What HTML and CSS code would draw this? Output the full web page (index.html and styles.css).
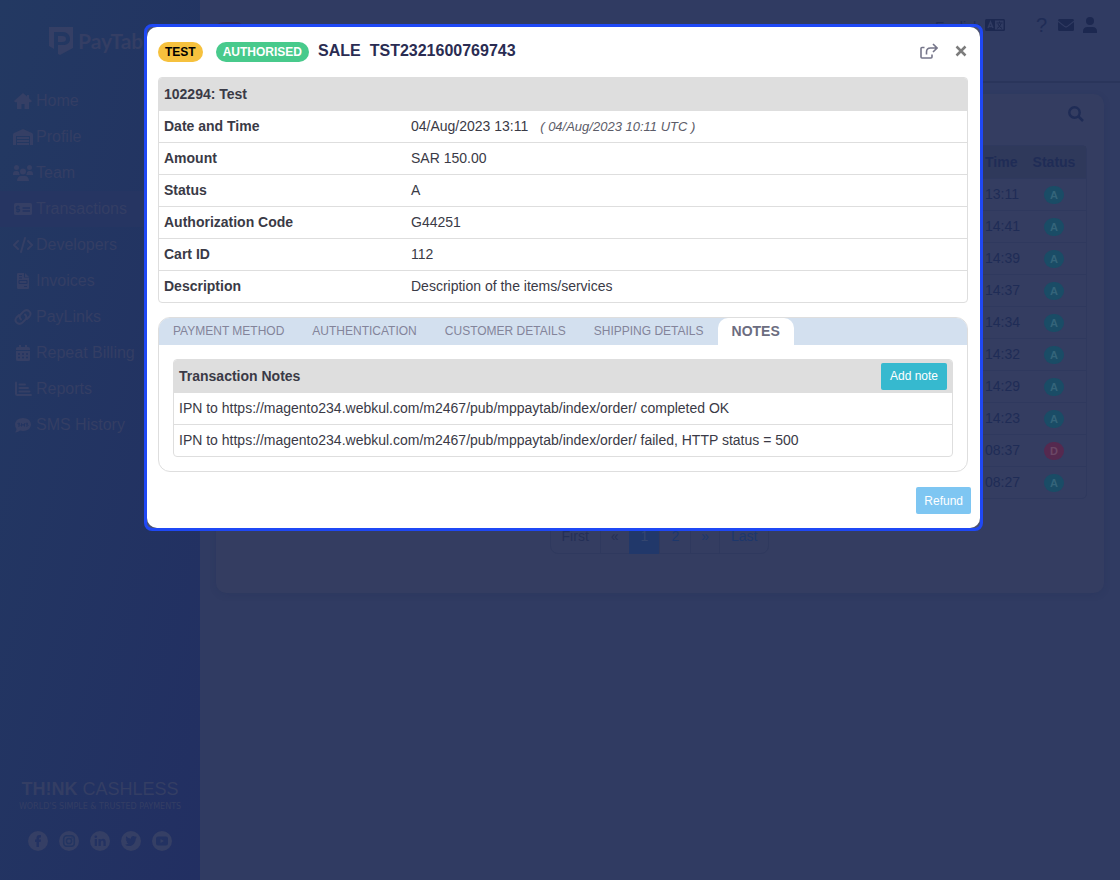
FILE: index.html
```
<!DOCTYPE html>
<html lang="en">
<head>
    <meta charset="UTF-8">
    <meta name="viewport" content="width=device-width, initial-scale=1.0">
    <title>PayTabs - Transactions</title>
    <link rel="stylesheet" href="styles.css">
</head>
<body>
    <div class="page">
        <aside class="sidebar">
            <a class="logo" href="#">
                <svg width="24" height="30" viewBox="0 0 24 30"><path fill-rule="evenodd" d="M0 1h24v21L11 29l-2-1V19h5c4 0 7-2 7-6s-3-7-7-7H5v17l-5-3zM9 10h4c3 0 4 1 4 3s-1 3-4 3H9z"/></svg>
                <span>PayTabs</span>
            </a>
            <nav class="menu">
                <a href="#"><svg width="20" height="16" viewBox="0 0 20 16"><path d="M10 0L1 8l1 1.300h2V16h4.500v-5h3v5H16V9.300h2L19 8l-3-2.700V2h-2v1.500z"/></svg>Home</a>
                <a href="#"><svg width="20" height="16" viewBox="0 0 20 16"><path d="M10 0L1 4Q0 4.500 0 5.500V16h3V7h14v9h3V5.500Q20 4.500 19 4zM4 8h12v2H4zM4 11h12v2H4zM4 14h12v2H4z"/></svg>Profile</a>
                <a href="#"><svg width="20" height="16" viewBox="0 0 20 16"><circle cx="3.500" cy="2.500" r="2.500"/><circle cx="16.500" cy="2.500" r="2.500"/><circle cx="10" cy="6.500" r="3"/><path d="M0 9c0-2 1-3 2.500-3h2L6 7c0 1.500.5 2.500 1 3H0zM20 9c0-2-1-3-2.500-3h-2L14 7c0 1.500-.5 2.500-1 3h7zM4 16c0-3 1.500-5 4-5h4c2.500 0 4 2 4 5z"/></svg>Team</a>
                <a class="active" href="#"><svg width="20" height="16" viewBox="0 0 20 16"><rect x="1" y="2" width="18" height="12" rx="1.500"/><path class="cut" d="M9.500 7H17M9.500 10H17M6.500 6q-3-1-3 .7T5 8.200 6.500 9.500 3.200 10M5 4.500v1M5 10.500v1"/></svg>Transactions</a>
                <a href="#"><svg width="20" height="16" viewBox="0 0 20 16"><path class="line" d="M5 4L1 8l4 4M15 4l4 4-4 4M12 1L8 15"/></svg>Developers</a>
                <a href="#"><svg width="20" height="16" viewBox="0 0 20 16"><path d="M4 1q0-1 1-1h6v4.500h5V15q0 1-1 1H5q-1 0-1-1zM12 0l4 4h-4z"/><path class="cut thin" d="M6 2.500h3M6 5h3M6 7.500h8v3H6zM11 13.500h3"/></svg>Invoices</a>
                <a href="#"><svg width="20" height="16" viewBox="0 0 20 16"><path class="line" d="M8 10.500c-2-2-1.500-4 0-5.500l2.500-2.500c4-3.500 9 1 6 5L14 10M12 5.500c2 2 1.500 4 0 5.500l-2.500 2.500c-4 3.500-9-1-6-5L6 6"/></svg>PayLinks</a>
                <a href="#"><svg width="20" height="16" viewBox="0 0 20 16"><path d="M3 5V3.500Q3 2 4.500 2H6V0h2v2h4V0h2v2h1.500Q17 2 17 3.500V5zM3 6h14v8.500q0 1.500-1.500 1.500h-11Q3 16 3 14.500z"/><path class="cut" stroke-dasharray="2 2" d="M5 9h10M5 12.500h10"/></svg>Repeat Billing</a>
                <a href="#"><svg width="20" height="16" viewBox="0 0 20 16"><path class="line" d="M3 1.500V13q0 1 1 1h14M6.500 3.500H12M6.500 7H15M6.500 10.500h10"/></svg>Reports</a>
                <a href="#"><svg width="20" height="16" viewBox="0 0 20 16"><path d="M10 1c4.500 0 8 2.800 8 6.500S14.500 14 10 14q-1.500 0-3-.4Q5 15.500 2 15.500q1.500-2 1.500-3.500Q2 10 2 7.500C2 3.800 5.500 1 10 1z"/><path class="cut thin" d="M7 6.500q-2-1-2 0t1 1 1 1-2 .5M8.500 9.500v-3l1.500 2 1.500-2v3M15 6.500q-2-1-2 0t1 1 1 1-2 .5"/></svg>SMS History</a>
            </nav>
            <div class="sidebar-footer">
                <div class="slogan"><b>TH!NK</b> CASHLESS</div>
                <div class="tagline">WORLD'S SIMPLE &amp; TRUSTED PAYMENTS</div>
                <div class="social">
                    <a href="#" aria-label="Facebook"><svg width="20" height="20" viewBox="0 0 20 20"><circle cx="10" cy="10" r="10"/><path class="hole" d="M8.500 16v-5H7V8.500h1.500V7q0-3 3-3H13v2.500h-1q-1 0-1 1v1h2l-.4 2.500H11v5z"/></svg></a>
                    <a href="#" aria-label="Instagram"><svg width="20" height="20" viewBox="0 0 20 20"><circle cx="10" cy="10" r="10"/><rect class="cut" x="4.700" y="4.700" width="10.600" height="10.600" rx="3"/><circle class="cut" cx="10" cy="10" r="2.600"/><circle class="hole" cx="13" cy="7" r=".7"/></svg></a>
                    <a href="#" aria-label="LinkedIn"><svg width="20" height="20" viewBox="0 0 20 20"><circle cx="10" cy="10" r="10"/><circle class="hole" cx="5.800" cy="5.800" r="1.300"/><path class="hole" d="M4.700 8H7v7H4.700zM8.500 8h2.200v1q2-2 4-.7 1 1 1 2.700v4h-2.300v-4q0-1.500-1.300-1.500T10.800 11v4H8.500z"/></svg></a>
                    <a href="#" aria-label="Twitter"><svg width="20" height="20" viewBox="0 0 20 20"><circle cx="10" cy="10" r="10"/><path class="hole" d="M4 13.500q2 .2 3.500-1-1.700-.3-2-1.700h1Q4.800 10 4.800 8.300l1 .3Q4.300 7 5.200 5.300 7 7.500 10 7.700 9.800 5 12.300 5q1 0 1.700.8l1.600-.6-1 1.400 1.400-.3-1.300 1.400c0 4-3 7.300-6.500 7.300q-2.500 0-4.200-1.500z"/></svg></a>
                    <a href="#" aria-label="YouTube"><svg width="20" height="20" viewBox="0 0 20 20"><circle cx="10" cy="10" r="10"/><rect class="hole" x="4" y="5.500" width="12" height="9" rx="2"/><path d="M8.500 8v4l3.500-2z"/></svg></a>
                </div>
            </div>
        </aside>

        <main class="main">
            <header class="topbar">
                <span class="mode"></span>
                <span class="language">English</span>
                <svg width="20" height="16" viewBox="0 0 20 16"><rect y="2" width="20" height="12" rx="1.500"/><path class="cut" d="M3 11l2.500-6L8 11M4 9.500h3"/><rect class="cut-fill" x="10" y="3.500" width="8.500" height="9"/><path class="mark" d="M11.500 6h6M14.500 4.500V6M12 11.500q3-1.500 4-5M13 7q1 3 4 4.500"/></svg>
                <div class="tools">
                    <span class="help">?</span>
                    <svg width="16" height="12" viewBox="0 0 16 12"><path d="M0 1.500Q0 0 1.500 0h13Q16 0 16 1.500L9 7Q8 7.700 7 7zM0 3l6.500 5Q8 9 9.500 8L16 3v7.500q0 1.500-1.500 1.500h-13Q0 12 0 10.500z"/></svg>
                    <svg width="14" height="16" viewBox="0 0 14 16"><circle cx="7" cy="4" r="4"/><path d="M0 16v-1.500Q0 10 4.500 10h5Q14 10 14 14.500V16z"/></svg>
                </div>
            </header>
            <section class="card">
                <div class="card-head">
                    <svg width="16" height="16" viewBox="0 0 16 16"><circle class="line" cx="6.500" cy="6.500" r="5.200"/><path class="line" d="M10.500 10.500l4.500 4.500"/></svg>
                </div>
                <table class="transactions">
                    <thead>
                        <tr><th></th><th class="time">Time</th><th class="state">Status</th></tr>
                    </thead>
                    <tbody>
                        <tr><td></td><td>13:11</td><td class="state"><span class="dot">A</span></td></tr>
                        <tr><td></td><td>14:41</td><td class="state"><span class="dot">A</span></td></tr>
                        <tr><td></td><td>14:39</td><td class="state"><span class="dot">A</span></td></tr>
                        <tr><td></td><td>14:37</td><td class="state"><span class="dot">A</span></td></tr>
                        <tr><td></td><td>14:34</td><td class="state"><span class="dot">A</span></td></tr>
                        <tr><td></td><td>14:32</td><td class="state"><span class="dot">A</span></td></tr>
                        <tr><td></td><td>14:29</td><td class="state"><span class="dot">A</span></td></tr>
                        <tr><td></td><td>14:23</td><td class="state"><span class="dot">A</span></td></tr>
                        <tr><td></td><td>08:37</td><td class="state"><span class="dot declined">D</span></td></tr>
                        <tr><td></td><td>08:27</td><td class="state"><span class="dot">A</span></td></tr>
                    </tbody>
                </table>
                <nav class="pagination">
                    <a class="disabled" href="#">First</a>
                    <a class="disabled arrow" href="#">«</a>
                    <a class="current" href="#">1</a>
                    <a href="#">2</a>
                    <a class="arrow" href="#">»</a>
                    <a href="#">Last</a>
                </nav>
            </section>
        </main>
    </div>

    <div class="backdrop">
        <div class="modal" role="dialog" aria-labelledby="modalTitle">
            <div class="modal-body">
                <div class="modal-header">
                    <span class="badge badge-test">TEST</span>
                    <span class="badge badge-ok">AUTHORISED</span>
                    <h2 id="modalTitle"><span>SALE</span><span>TST2321600769743</span></h2>
                    <button class="icon-btn" aria-label="Share"><svg width="18" height="16" viewBox="0 0 18 16"><path d="M4.500 4.500H2q-1 0-1 1V14q0 1 1 1h9q1 0 1-1v-2.500M6.500 11.500V9q0-4 4-4H17M13 1l4 4-4 4"/></svg></button>
                    <button class="icon-btn close" aria-label="Close"><svg width="14" height="14" viewBox="0 0 14 14"><path d="M2.500 2.500l9 9M11.500 2.500l-9 9"/></svg></button>
                </div>

                <table class="grid details">
                    <thead>
                        <tr><th colspan="2">102294: Test</th></tr>
                    </thead>
                    <tbody>
                        <tr><th>Date and Time</th><td>04/Aug/2023 13:11 <i>( 04/Aug/2023 10:11 UTC )</i></td></tr>
                        <tr><th>Amount</th><td>SAR 150.00</td></tr>
                        <tr><th>Status</th><td>A</td></tr>
                        <tr><th>Authorization Code</th><td>G44251</td></tr>
                        <tr><th>Cart ID</th><td>112</td></tr>
                        <tr><th>Description</th><td>Description of the items/services</td></tr>
                    </tbody>
                </table>

                <div class="tab-panel">
                    <div class="tabs" role="tablist">
                        <button role="tab">PAYMENT METHOD</button>
                        <button role="tab">AUTHENTICATION</button>
                        <button role="tab">CUSTOMER DETAILS</button>
                        <button role="tab">SHIPPING DETAILS</button>
                        <button role="tab" class="selected" aria-selected="true">NOTES</button>
                    </div>
                    <div class="tab-content">
                        <table class="grid">
                            <thead>
                                <tr><th><div class="notes-head">Transaction Notes <button class="btn btn-add">Add note</button></div></th></tr>
                            </thead>
                            <tbody>
                                <tr><td>IPN to https://magento234.webkul.com/m2467/pub/mppaytab/index/order/ completed OK</td></tr>
                                <tr><td>IPN to https://magento234.webkul.com/m2467/pub/mppaytab/index/order/ failed, HTTP status = 500</td></tr>
                            </tbody>
                        </table>
                    </div>
                </div>

                <div class="modal-footer">
                    <button class="btn btn-refund">Refund</button>
                </div>
            </div>
        </div>
    </div>
</body>
</html>
```
FILE: styles.css
```
* {
    box-sizing: border-box;
}
body {
    margin: 0;
    font-family: "Liberation Sans", Arial, sans-serif;
    font-size: 14px;
    line-height: 20px;
    color: #3a3a46;
    background: #303b62;
}
a {
    color: inherit;
    text-decoration: none;
}
button {
    font-family: inherit;
    border: none;
    cursor: pointer;
}
table {
    width: 100%;
    border-collapse: separate;
    border-spacing: 0;
}
.page {
    display: flex;
    min-height: 100vh;
}

/* sidebar */
.sidebar {
    display: flex;
    flex-direction: column;
    width: 200px;
    flex-shrink: 0;
    padding-bottom: 29px;
    background: linear-gradient(105deg, #233962, #222f62);
    color: #343e64;
}
.sidebar svg {
    fill: #353f65;
    flex-shrink: 0;
}
.sidebar .line {
    fill: none;
    stroke: #353f65;
    stroke-width: 2;
    stroke-linecap: round;
}
.sidebar .cut {
    fill: none;
    stroke: #233562;
    stroke-width: 1.5;
}
.sidebar .thin {
    stroke-width: 1;
}
.sidebar .hole {
    fill: #233262;
}
.logo {
    display: flex;
    align-items: center;
    gap: 5px;
    height: 83px;
    padding-left: 49px;
    padding-bottom: 2px;
    font-family: Lato, sans-serif;
    font-size: 21px;
    font-weight: bold;
}
.menu a {
    display: flex;
    align-items: center;
    gap: 3px;
    height: 36px;
    padding-left: 13px;
    font-size: 16px;
}
.menu .active {
    background: #263562;
}
.sidebar-footer {
    margin-top: auto;
    text-align: center;
}
.slogan {
    font-size: 18px;
    line-height: 22px;
}
.tagline {
    font-family: "DejaVu Sans", sans-serif;
    font-size: 8px;
    line-height: 14px;
    white-space: nowrap;
}
.social {
    display: flex;
    justify-content: center;
    gap: 11px;
    margin-top: 17px;
}
.social svg {
    display: block;
}

/* page behind the dialog */
.main {
    flex: 1;
    color: #1f2c56;
}
.topbar {
    display: flex;
    align-items: flex-start;
    height: 83px;
    padding: 17px 23px 0 15px;
    border-bottom: 2px solid #2a355b;
}
.topbar svg {
    fill: #1c2850;
}
.topbar .cut,
.topbar .mark {
    fill: none;
    stroke: #303b62;
    stroke-width: 1.5;
}
.topbar .mark {
    stroke: #1c2850;
    stroke-width: 1;
}
.topbar .cut-fill {
    fill: #303b62;
}
.mode {
    width: 29px;
    height: 20px;
    margin: 5px auto 0 0;
    border-radius: 8px;
    background: #352f50;
}
.language {
    margin-right: 4px;
    line-height: 20px;
}
.tools {
    display: flex;
    align-items: center;
    gap: 9px;
    height: 16px;
    margin-left: 31px;
}
.help {
    margin-right: 2px;
    font-size: 20px;
}
.card {
    margin: 11px 16px 0;
    padding: 0 17px 39px;
    border-radius: 10px;
    background: #343d61;
    box-shadow: 0 2px 6px rgba(30, 44, 86, 0.2);
}
.card-head {
    display: flex;
    justify-content: flex-end;
    height: 51px;
    padding: 12px 3px 0;
}
.card-head .line {
    fill: none;
    stroke: #1f2c56;
    stroke-width: 2.5;
}
.transactions {
    border: 1px solid #2f395e;
    border-radius: 5px;
}
.transactions th {
    height: 32px;
    padding: 0;
    background: #2f395b;
    text-align: left;
}
.transactions td {
    height: 32px;
    padding: 0 0 2px;
    border-top: 1px solid #2f395e;
}
.transactions .time {
    width: 37px;
}
.transactions .state {
    width: 64px;
    text-align: center;
}
.dot {
    display: inline-block;
    width: 20px;
    border-radius: 9px;
    background: #1a4c66;
    color: #34647a;
    font-size: 11px;
    font-weight: bold;
    line-height: 18px;
}
.declined {
    background: #55294f;
    color: #6b4766;
}
.pagination {
    display: flex;
    justify-content: center;
    margin-top: 19px;
    color: #1d376b;
}
.pagination a {
    margin-left: -1px;
    padding: 7px 11px;
    border: 1px solid #2f395e;
}
.pagination .arrow {
    padding: 7px 10px;
}
.pagination a:first-child {
    border-radius: 0 0 0 8px;
}
.pagination a:last-child {
    border-radius: 0 0 8px 0;
}
.pagination .disabled {
    color: #242f56;
}
.pagination .current {
    background: #21386a;
    border-color: #21386a;
    color: #34466f;
}

/* dialog */
.backdrop {
    position: fixed;
    top: 0;
    left: 0;
    right: 0;
    bottom: 0;
    padding: 24px 0 24px 7px;
    overflow: auto;
}
.modal {
    max-width: 839px;
    margin: 0 auto;
    border: 3px solid #1f48f5;
    border-radius: 8px;
    background: #4a5170;
}
.modal-body {
    padding: 14px 12px 14px 11px;
    border-radius: 10px;
    background: #fff;
}
.modal-header {
    display: flex;
    align-items: center;
    height: 20px;
    margin-bottom: 16px;
}
.badge {
    margin-top: 2px;
    padding: 0 7px;
    border-radius: 10px;
    font-size: 12px;
    font-weight: bold;
    line-height: 20px;
}
.badge-test {
    margin-right: 13px;
    background: #f6c13d;
    color: #000;
}
.badge-ok {
    margin-right: 9px;
    background: #48ca8c;
    color: #fff;
}
.modal-header h2 {
    display: flex;
    gap: 9px;
    margin: 0 auto 0 0;
    font-size: 16px;
    line-height: 20px;
    color: #2a2c52;
}
.icon-btn {
    padding: 0;
    background: none;
}
.icon-btn svg {
    display: block;
    fill: none;
    stroke: #76768a;
    stroke-width: 1.6;
}
.close {
    margin-left: 16px;
}
.close svg {
    stroke: #7c7c7c;
    stroke-width: 2.5;
}
.grid {
    border: 1px solid #dedede;
    border-radius: 4px;
    overflow: hidden;
}
.grid th,
.grid td {
    height: 32px;
    padding: 0 5px 1px;
    border-bottom: 1px solid #dedede;
    text-align: left;
}
.grid thead th {
    height: 33px;
    background: #dedede;
    border-bottom: none;
}
.grid tbody tr:last-child td,
.grid tbody tr:last-child th {
    height: 31px;
    border-bottom: none;
}
.details tbody th {
    width: 247px;
}
.details i {
    margin-left: 8px;
    font-size: 13px;
    color: #5c5c68;
}
.tab-panel {
    margin-top: 14px;
    border: 1px solid #dedede;
    border-radius: 12px;
    overflow: hidden;
}
.tabs {
    display: flex;
    height: 27px;
    background: #d3e0ef;
}
.tabs button {
    padding: 0 14px;
    background: none;
    color: #83849a;
    font-size: 12px;
    line-height: 27px;
}
.tabs .selected {
    border-radius: 10px 10px 0 0;
    background: #fff;
    color: #6c6d80;
    font-size: 14px;
    font-weight: bold;
}
.tab-content {
    padding: 14px;
}
.notes-head {
    display: flex;
    align-items: center;
    justify-content: space-between;
}
.btn {
    height: 27px;
    border-radius: 2px;
    color: #fff;
    font-size: 12px;
}
.btn-add {
    padding: 0 9px;
    background: #36b9cf;
}
.modal-footer {
    display: flex;
    justify-content: flex-end;
    margin: 15px -3px 0 0;
}
.btn-refund {
    padding: 0 8px;
    background: #7ec6f2;
}
```
